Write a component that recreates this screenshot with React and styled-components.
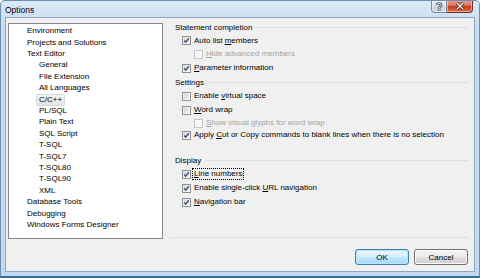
import React from "react";
import styled, { createGlobalStyle } from "styled-components";

const Global = createGlobalStyle`
  html, body { margin: 0; padding: 0; background: #fff; }
  body { font-family: "Liberation Sans", Arial, sans-serif; }
  * { box-sizing: border-box; }
`;

const Window = styled.div`
  width: 480px;
  height: 278px;
  display: flex;
  flex-direction: column;
  background: linear-gradient(to bottom, #dceaf7 0px, #c9ddf1 20px, #c4d9ef 100%);
  border: 1px solid #6d8fb0;
  border-bottom: 2px solid #2f6f9a;
  border-radius: 5px 5px 0 0;
  overflow: hidden;
  position: relative;
`;

const TitleBar = styled.div`
  height: 16px;
  display: flex;
  align-items: center;
  padding-left: 4px;
  padding-top: 1px;
  font-size: 8.5px;
  color: #000;
`;

const TitleButtons = styled.div`
  position: absolute;
  top: -1px;
  right: 6px;
  display: flex;
`;

const CaptionButton = styled.div`
  width: ${(p) => p.w}px;
  height: 13px;
  display: flex;
  align-items: center;
  justify-content: center;
  border: 1px solid ${(p) => (p.close ? "#7a2a1c" : "#7a8797")};
  border-top: none;
  border-left: ${(p) => (p.close ? "none" : "1px solid #7a8797")};
  border-radius: ${(p) => (p.close ? "0 0 4px 0" : "0 0 0 4px")};
  background: ${(p) =>
    p.close
      ? "linear-gradient(to bottom, #e8a493 0%, #d8745d 45%, #c43c1e 55%, #d86e4e 100%)"
      : "linear-gradient(to bottom, #eef3f8 0%, #dbe4ee 45%, #c4d1df 55%, #d4e0ec 100%)"};
  box-shadow: inset 0 0 0 1px rgba(255, 255, 255, 0.45);
`;

const Client = styled.div`
  flex: 1;
  margin: 0 4px 4px 4px;
  background: #f0f0f0;
  border: 1px solid #8ea6bf;
  display: flex;
  flex-direction: column;
  padding: 5px 6px 0 2px;
  font-size: 8px;
  color: #000;
`;

const Main = styled.div`
  display: flex;
  height: 216px;
`;

const Tree = styled.div`
  width: 155px;
  height: 216px;
  background: #fff;
  border: 1px solid #828790;
  padding-top: 1.5px;
`;

const TreeRow = styled.div`
  height: 11.41px;
  display: flex;
  align-items: center;
  padding-left: ${(p) => 17 + p.level * 12}px;
`;

const TreeLabel = styled.span`
  padding: 0 2px;
  margin-left: -2px;
  line-height: 10px;
  border: 1px solid ${(p) => (p.selected ? "#d9d9d9" : "transparent")};
  border-radius: 2px;
  background: ${(p) =>
    p.selected ? "linear-gradient(to bottom, #f4f4f4, #e3e3e3)" : "transparent"};
  white-space: nowrap;
`;

const Right = styled.div`
  flex: 1;
  margin-left: 7px;
  display: flex;
  flex-direction: column;
`;

const GroupHeader = styled.div`
  height: ${(p) => p.h}px;
  display: flex;
  align-items: center;
  padding-left: 5px;
  margin-top: ${(p) => p.mt || 0}px;
  white-space: nowrap;
  &::after {
    content: "";
    flex: 1;
    height: 1px;
    margin-left: 4px;
    background: #d5dfe5;
  }
`;

const CheckRow = styled.div`
  height: ${(p) => p.h}px;
  display: flex;
  align-items: center;
  padding-left: ${(p) => (p.nested ? 24 : 12)}px;
  color: ${(p) => (p.disabled ? "#a3a3a3" : "#000")};
  white-space: nowrap;
`;

const Label = styled.span`
  margin-left: 1px;
  padding: 0 1px;
  line-height: 10px;
  border: 1px ${(p) => (p.focused ? "dotted #000" : "solid transparent")};
`;

const Separator = styled.div`
  margin-top: auto;
  height: 1px;
  background: #d5dfe5;
  margin-bottom: 1px;
`;

const ButtonRow = styled.div`
  display: flex;
  justify-content: flex-end;
  gap: 5px;
  margin-top: 10px;
`;

const Button = styled.div`
  width: 54px;
  height: 16px;
  display: flex;
  align-items: center;
  justify-content: center;
  border: 1px solid ${(p) => (p.primary ? "#3c7fb1" : "#707070")};
  border-radius: 3px;
  background: ${(p) =>
    p.primary
      ? "linear-gradient(to bottom, #eaf6fd 0%, #d9f0fc 45%, #bee6fd 55%, #a7d9f5 100%)"
      : "linear-gradient(to bottom, #f2f2f2 0%, #ebebeb 45%, #dddddd 55%, #cfcfcf 100%)"};
  box-shadow: inset 0 0 0 1px ${(p) => (p.primary ? "#b7e4fb" : "#fcfcfc")};
  font-size: 8px;
`;

const Box = ({ checked, disabled }) => (
  <svg width="9" height="9" viewBox="0 0 9 9" style={{ flex: "none" }}>
    <defs>
      <linearGradient id={disabled ? "gd" : "ge"} x1="0" y1="0" x2="1" y2="1">
        <stop offset="0" stopColor={disabled ? "#f0f0f0" : "#cbcfd5"} />
        <stop offset="1" stopColor={disabled ? "#fbfbfb" : "#f6f6f6"} />
      </linearGradient>
    </defs>
    <rect x="0.5" y="0.5" width="8" height="8" fill="#fff" stroke={disabled ? "#c6c6c6" : "#8e8f8f"} />
    <rect x="1.5" y="1.5" width="6" height="6" fill={`url(#${disabled ? "gd" : "ge"})`} />
    {checked && (
      <path d="M2.2 4.6 L3.7 6.2 L6.9 2.2" fill="none" stroke="#3e4f82" strokeWidth="1.4" />
    )}
  </svg>
);

const U = styled.span`
  text-decoration: underline;
`;

const Check = ({ checked, disabled, nested, h, focused, children }) => (
  <CheckRow h={h} nested={nested} disabled={disabled}>
    <Box checked={checked} disabled={disabled} />
    <Label focused={focused}>{children}</Label>
  </CheckRow>
);

const treeItems = [
  ["Environment", 0],
  ["Projects and Solutions", 0],
  ["Text Editor", 0],
  ["General", 1],
  ["File Extension", 1],
  ["All Languages", 1],
  ["C/C++", 1, true],
  ["PL/SQL", 1],
  ["Plain Text", 1],
  ["SQL Script", 1],
  ["T-SQL", 1],
  ["T-SQL7", 1],
  ["T-SQL80", 1],
  ["T-SQL90", 1],
  ["XML", 1],
  ["Database Tools", 0],
  ["Debugging", 0],
  ["Windows Forms Designer", 0],
];

export default function App() {
  return (
    <>
      <Global />
      <Window>
        <TitleBar>Options</TitleBar>
        <TitleButtons>
          <CaptionButton w={16}>
            <svg width="8" height="9" viewBox="0 0 8 9">
              <path d="M1.8 3 C1.8 0.8 6.2 0.8 6.2 3 C6.2 4.4 4.2 4.4 4.2 6" fill="none" stroke="#3a3f48" strokeWidth="2.4" />
              <path d="M1.8 3 C1.8 0.8 6.2 0.8 6.2 3 C6.2 4.4 4.2 4.4 4.2 6" fill="none" stroke="#fff" strokeWidth="1" />
              <rect x="3.2" y="6.8" width="2" height="2" fill="#fff" stroke="#3a3f48" strokeWidth="0.6" />
            </svg>
          </CaptionButton>
          <CaptionButton w={26} close>
            <svg width="10" height="8" viewBox="0 0 10 8">
              <path d="M2 1 L8 7 M8 1 L2 7" stroke="#5a1a10" strokeWidth="3" />
              <path d="M2 1 L8 7 M8 1 L2 7" stroke="#fff" strokeWidth="1.4" />
            </svg>
          </CaptionButton>
        </TitleButtons>
        <Client>
          <Main>
            <Tree>
              {treeItems.map(([t, lvl, sel]) => (
                <TreeRow key={t} level={lvl}>
                  <TreeLabel selected={sel}>{t}</TreeLabel>
                </TreeRow>
              ))}
            </Tree>
            <Right>
              <GroupHeader h={13} mt={-2}>Statement completion</GroupHeader>
              <Check h={13} checked>
                Auto list <U>m</U>embers
              </Check>
              <Check h={14} nested disabled>
                <U>H</U>ide advanced members
              </Check>
              <Check h={14} checked>
                <U>P</U>arameter information
              </Check>
              <GroupHeader h={14}>Settings</GroupHeader>
              <Check h={14}>
                Enable <U>v</U>irtual space
              </Check>
              <Check h={14}>
                <U>W</U>ord wrap
              </Check>
              <Check h={12} nested disabled>
                <U>S</U>how visual glyphs for word wrap
              </Check>
              <Check h={12} checked>
                Apply <U>C</U>ut or Copy commands to blank lines when there is no selection
              </Check>
              <GroupHeader h={14} mt={12}>Display</GroupHeader>
              <Check h={14} checked focused>
                <U>L</U>ine numbers
              </Check>
              <Check h={14} checked>
                Enable single-click <U>U</U>RL navigation
              </Check>
              <Check h={14} checked>
                <U>N</U>avigation bar
              </Check>
              <Separator />
            </Right>
          </Main>
          <ButtonRow>
            <Button primary>OK</Button>
            <Button>Cancel</Button>
          </ButtonRow>
        </Client>
      </Window>
    </>
  );
}
